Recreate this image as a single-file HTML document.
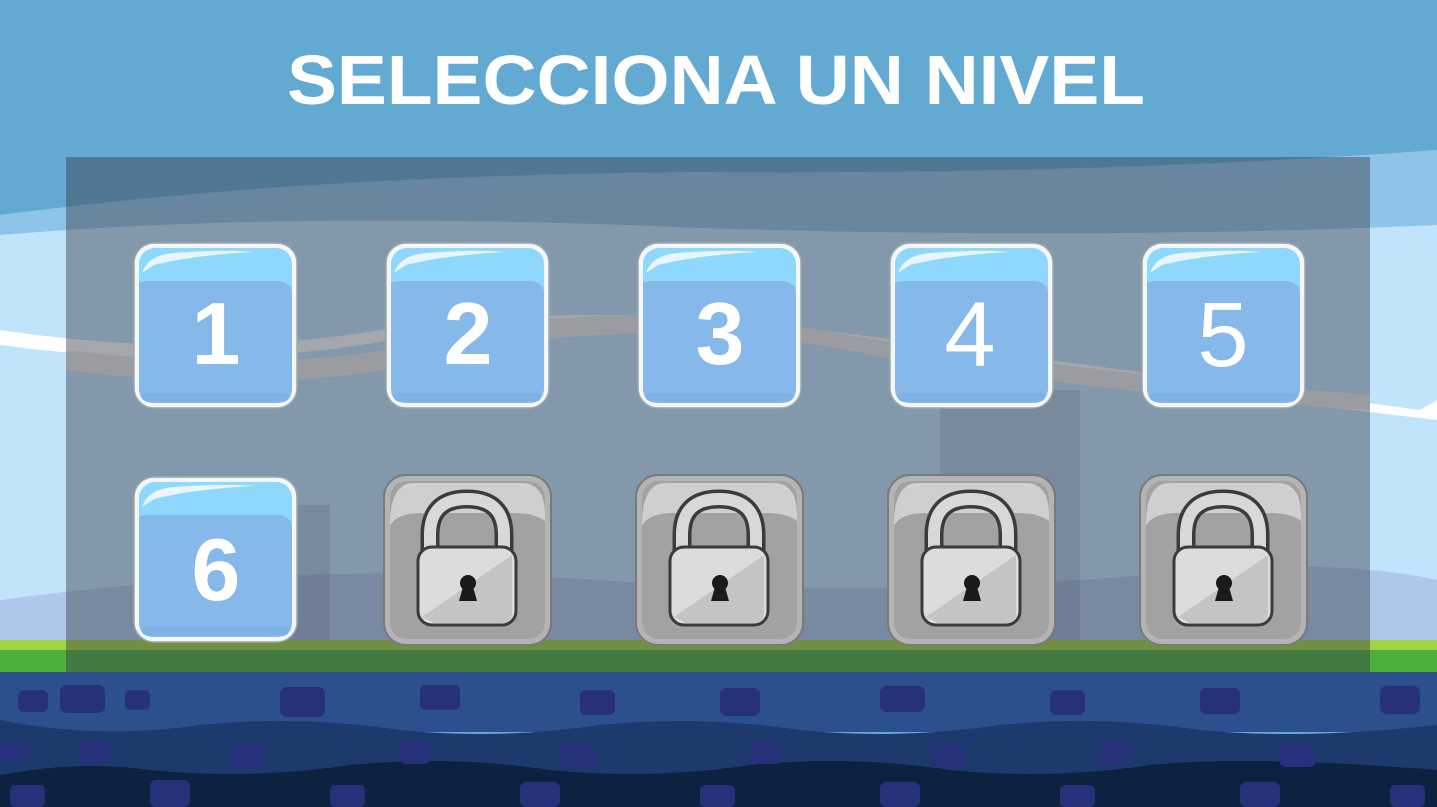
<!DOCTYPE html>
<html><head><meta charset="utf-8"><style>
html,body{margin:0;padding:0;width:1437px;height:807px;overflow:hidden;background:#63aad3}
svg{display:block}
</style></head><body>
<svg width="1437" height="807" viewBox="0 0 1437 807" xmlns="http://www.w3.org/2000/svg">
<defs>
<g id="blue">
<rect x="0" y="0" width="163" height="165" rx="20" fill="#f4f6f8" stroke="#9aa" stroke-width="1.5"/>
<rect x="5" y="5" width="153" height="155" rx="16" fill="#8ed8fd"/>
<path d="M5 40 Q5 38 20 38 H143 Q158 38 158 52 V145 Q158 160 143 160 H20 Q5 160 5 145 Z" fill="#86b8ea"/>
<path d="M8 30 Q14 12 40 10 Q90 6 120 9 Q60 12 20 22 Z" fill="#ffffff" opacity="0.8"/>
<rect x="8" y="150" width="147" height="8" rx="4" fill="#7fb0e6"/>
</g>
<g id="lock">
<rect x="0" y="0" width="167" height="170" rx="22" fill="#b4b4b4" stroke="#7a7a7a" stroke-width="2"/>
<rect x="6" y="6" width="155" height="158" rx="17" fill="#a2a2a2"/>
<path d="M6 50 Q6 8 30 8 H137 Q161 8 161 40 V46 Q150 38 130 38 H37 Q14 38 6 50 Z" fill="#cfcfcf"/>
<path d="M46 78 V60 Q46 24 83 24 Q120 24 120 60 V78" fill="none" stroke="#3b3b3b" stroke-width="19"/>
<path d="M46 78 V60 Q46 24 83 24 Q120 24 120 60 V78" fill="none" stroke="#d8d8d8" stroke-width="12"/>
<rect x="34" y="72" width="98" height="78" rx="14" fill="#dcdcdc" stroke="#3b3b3b" stroke-width="3"/>
<path d="M38 142 L128 80 V137 Q128 148 118 148 H50 Z" fill="#c4c4c4"/>
<circle cx="84" cy="108" r="8" fill="#1a1a1a"/>
<path d="M79 112 L75 126 H93 L89 112 Z" fill="#1a1a1a"/>
</g>
</defs>
<rect width="1437" height="807" fill="#63aad3"/>
<path d="M0 215 Q300 175 700 172 Q1100 175 1437 150 V700 H0 Z" fill="#8fc4e9"/>
<path d="M0 235 Q300 210 700 228 Q1100 240 1437 225 V700 H0 Z" fill="#bfe4fb"/>
<path d="M0 330 Q200 360 380 330 Q600 300 820 330 Q1050 360 1200 380 L1420 410 L1437 400 V420 L1420 418 L1200 392 Q1050 372 820 342 Q600 312 380 342 Q200 372 0 345 Z" fill="#ffffff"/>
<path d="M0 600 Q300 560 600 580 Q900 600 1200 570 Q1350 560 1437 580 V660 H0 Z" fill="#aec8ec"/>
<path d="M66 350 Q300 380 480 330 Q620 300 820 330 Q1050 370 1370 395 V410 Q1050 390 820 345 Q620 320 480 350 Q300 400 66 370 Z" fill="#ececec"/>
<rect x="940" y="390" width="140" height="250" fill="#7f8ea8" opacity="0.3"/>
<rect x="270" y="505" width="60" height="140" fill="#7f8ea8" opacity="0.3"/>
<rect x="0" y="640" width="1437" height="30" fill="#9fd341"/>
<rect x="0" y="650" width="1437" height="25" fill="#4cae3c"/>
<rect x="0" y="672" width="1437" height="60" fill="#2c4f8e"/>
<path d="M0 720 Q100 740 200 725 Q300 715 400 730 Q500 740 600 725 Q700 715 800 730 Q900 740 1000 725 Q1100 715 1200 730 Q1300 740 1437 725 V807 H0 Z" fill="#1c3b6c"/>
<path d="M0 775 Q80 760 150 770 Q250 780 350 765 Q450 755 550 770 Q650 780 750 765 Q850 755 950 770 Q1050 780 1150 765 Q1250 755 1437 770 V807 H0 Z" fill="#0d2141"/>
<g fill="#27307a">
<rect x="18" y="690" width="30" height="22" rx="6"/><rect x="60" y="685" width="45" height="28" rx="7"/><rect x="125" y="690" width="25" height="20" rx="5"/><rect x="280" y="687" width="45" height="30" rx="7"/><rect x="420" y="685" width="40" height="25" rx="6"/><rect x="580" y="690" width="35" height="25" rx="6"/><rect x="720" y="688" width="40" height="28" rx="7"/><rect x="880" y="686" width="45" height="26" rx="7"/><rect x="1050" y="690" width="35" height="25" rx="6"/><rect x="1200" y="688" width="40" height="26" rx="6"/><rect x="1380" y="686" width="40" height="28" rx="7"/>
<rect x="0" y="742" width="30" height="20" rx="5"/><rect x="80" y="740" width="30" height="24" rx="5"/><rect x="230" y="745" width="35" height="22" rx="5"/><rect x="400" y="740" width="30" height="24" rx="5"/><rect x="560" y="745" width="35" height="22" rx="5"/><rect x="750" y="740" width="30" height="24" rx="5"/><rect x="930" y="745" width="35" height="22" rx="5"/><rect x="1100" y="740" width="30" height="24" rx="5"/><rect x="1280" y="745" width="35" height="22" rx="5"/>
<rect x="10" y="785" width="35" height="22" rx="5"/><rect x="150" y="780" width="40" height="27" rx="6"/><rect x="330" y="785" width="35" height="22" rx="5"/><rect x="520" y="782" width="40" height="25" rx="6"/><rect x="700" y="785" width="35" height="22" rx="5"/><rect x="880" y="782" width="40" height="25" rx="6"/><rect x="1060" y="785" width="35" height="22" rx="5"/><rect x="1240" y="782" width="40" height="25" rx="6"/><rect x="1390" y="785" width="35" height="22" rx="5"/>
</g>
<rect x="66" y="157" width="1304" height="515" fill="rgb(58,60,72)" opacity="0.45"/>
<text x="716" y="104" text-anchor="middle" font-family="Liberation Sans, sans-serif" font-weight="bold" font-size="70" fill="#fff" textLength="858" lengthAdjust="spacingAndGlyphs">SELECCIONA UN NIVEL</text>
<g font-family="Liberation Sans, sans-serif" fill="#fff" text-anchor="middle">
<use href="#blue" x="134" y="243"/><text x="216" y="364" font-size="88" font-weight="bold">1</text>
<use href="#blue" x="386" y="243"/><text x="468" y="364" font-size="88" font-weight="bold">2</text>
<use href="#blue" x="638" y="243"/><text x="720" y="364" font-size="88" font-weight="bold">3</text>
<use href="#blue" x="890" y="243"/><text x="970" y="366" font-size="92">4</text>
<use href="#blue" x="1142" y="243"/><text x="1223" y="366" font-size="92">5</text>
<use href="#blue" x="134" y="477"/><text x="216" y="600" font-size="88" font-weight="bold">6</text>
</g>
<use href="#lock" x="384" y="475"/>
<use href="#lock" x="636" y="475"/>
<use href="#lock" x="888" y="475"/>
<use href="#lock" x="1140" y="475"/>
</svg>
</body></html>
